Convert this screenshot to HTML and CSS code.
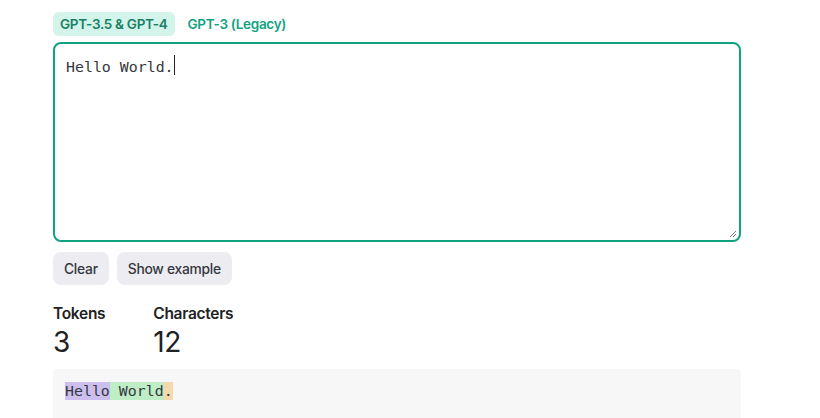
FILE: index.html
```html
<!DOCTYPE html>
<html>
<head>
<meta charset="utf-8">
<link rel="stylesheet" href="styles.css">
</head>
<body>
<main class="wrap">
  <div class="tabs">
    <button class="tab active">GPT-3.5 &amp; GPT-4</button>
    <button class="tab">GPT-3 (Legacy)</button>
  </div>
  <div class="editor">
    <div class="input">Hello World.<span class="caret"></span></div>
    <svg class="grip" width="8" height="8" viewBox="0 0 8 8"><path d="M7 1L1 7M7 4L4 7" stroke="#777" stroke-width="1"/></svg>
  </div>
  <div class="actions">
    <button class="btn">Clear</button>
    <button class="btn">Show example</button>
  </div>
  <div class="stats">
    <div class="stat"><div class="label">Tokens</div><div class="value">3</div></div>
    <div class="stat"><div class="label">Characters</div><div class="value">12</div></div>
  </div>
  <div class="output"><span class="t1">Hello</span><span class="t2"> World</span><span class="t3">.</span></div>
</main>
</body>
</html>
```
FILE: styles.css
```css
* { box-sizing: border-box; }
body {
  margin: 0;
  font-family: Inter, "Noto Sans", sans-serif;
  color: #202123;
  background: #fff;
  overflow: hidden;
}
.wrap {
  width: 688px;
  margin-left: 53px;
  padding-top: 12px;
}
.tabs { display: flex; gap: 6px; }
.tab {
  font-family: inherit;
  font-size: 13.5px;
  font-weight: 600;
  letter-spacing: -0.3px;
  border: 0;
  background: transparent;
  color: #10a37f;
  height: 24px;
  padding: 0 7px;
  border-radius: 6px;
}
.tab.active { background: #d2f4ea; color: #1a7f64; }
.editor {
  position: relative;
  margin-top: 6px;
  height: 200px;
  border: 2px solid #10a37f;
  border-radius: 8px;
}
.input {
  font-family: "DejaVu Sans Mono", monospace;
  font-size: 14.9px;
  color: #353740;
  padding: 13px 0 0 11px;
  line-height: 20px;
}
.caret {
  display: inline-block;
  width: 1px;
  height: 20px;
  background: #222;
  vertical-align: top;
  margin-top: -2px;
}
.grip { position: absolute; right: 2px; bottom: 2px; }
.actions { display: flex; gap: 8px; margin-top: 10px; }
.btn {
  font-family: inherit;
  font-size: 13.8px;
  font-weight: 500;
  letter-spacing: -0.25px;
  color: #353740;
  background: #ececf1;
  border: 0;
  border-radius: 8px;
  height: 33px;
  padding: 0 11px;
}
.stats { display: flex; gap: 48px; margin-top: 18px; }
.label { font-size: 15.5px; font-weight: 600; letter-spacing: -0.3px; line-height: 22px; }
.value { font-size: 28px; font-weight: 400; line-height: 34px; letter-spacing: -0.5px; }
.output {
  margin-top: 10px;
  height: 60px;
  background: #f7f7f8;
  border-radius: 4px;
  padding: 12px 12px;
  font-family: "DejaVu Sans Mono", monospace;
  font-size: 14.9px;
  line-height: 20px;
  color: #353740;
}
.t1 { background: rgba(107, 64, 216, 0.3); }
.t2 { background: rgba(104, 222, 122, 0.4); }
.t3 { background: rgba(244, 172, 54, 0.4); }
```
